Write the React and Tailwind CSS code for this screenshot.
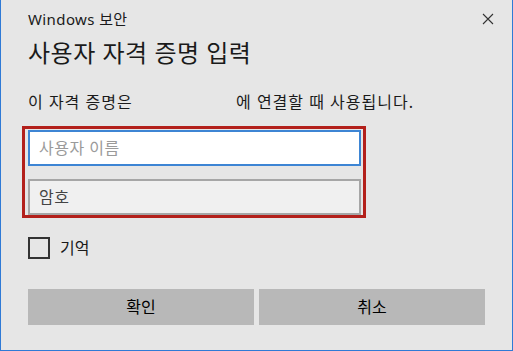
// Windows security credential prompt (Korean).

const FONT = { fontFamily: '"Noto Sans", "Noto Sans CJK KR", sans-serif' };

function CloseIcon() {
  return (
    <svg width="12" height="12" viewBox="0 0 12 12" className="text-[#333]">
      <path d="M1 1 L11 11 M11 1 L1 11" stroke="currentColor" strokeWidth="1.1" fill="none" />
    </svg>
  );
}

export default function App() {
  return (
    <div
      className="flex h-[351px] w-[513px] flex-col border-x border-b border-[#2f7ad6] bg-[#e6e6e6] text-[#1a1a1a]"
      style={FONT}
    >
      <div className="flex h-[38px] items-center justify-between pl-[27px] pr-[18px]">
        <span className="text-[15px] leading-none tracking-[0.4px]">Windows 보안</span>
        <CloseIcon />
      </div>

      <div className="flex h-[30px] items-center pl-[27px]">
        <h1 className="text-[24px] font-normal leading-none tracking-[0.5px]">사용자 자격 증명 입력</h1>
      </div>

      <div className="mt-[21px] flex h-[26px] items-center pl-[27px] text-[16px] leading-none tracking-[1px]">
        <span className="w-[208px]">이 자격 증명은</span>
        <span>에 연결할 때 사용됩니다.</span>
      </div>

      <div className="ml-[21px] mt-[11px] flex w-[344px] flex-col gap-[13px] border-[3px] border-[#b3201b] pl-[3px] pt-[1px]">
        <div className="flex h-[36px] w-[333px] items-center border-2 border-[#3d85d4] bg-white px-[9px] text-[16px] tracking-[0.5px] text-[#9a9a9a]">
          사용자 이름
        </div>
        <div className="flex h-[36px] w-[333px] items-center border-2 border-[#a6a6a6] bg-[#f0f0f0] px-[9px] text-[16px] tracking-[0.5px] text-[#444]">
          암호
        </div>
      </div>

      <div className="ml-[27px] mt-[18px] flex items-center gap-[10px]">
        <div className="h-[22px] w-[22px] border-2 border-[#333]" />
        <span className="text-[16px]">기억</span>
      </div>

      <div className="ml-[27px] mt-[29px] flex gap-[5px]">
        <button className="h-[36px] w-[226px] bg-[#b8b8b8] text-[16px] text-black">확인</button>
        <button className="h-[36px] w-[226px] bg-[#b8b8b8] text-[16px] text-black">취소</button>
      </div>
    </div>
  );
}
